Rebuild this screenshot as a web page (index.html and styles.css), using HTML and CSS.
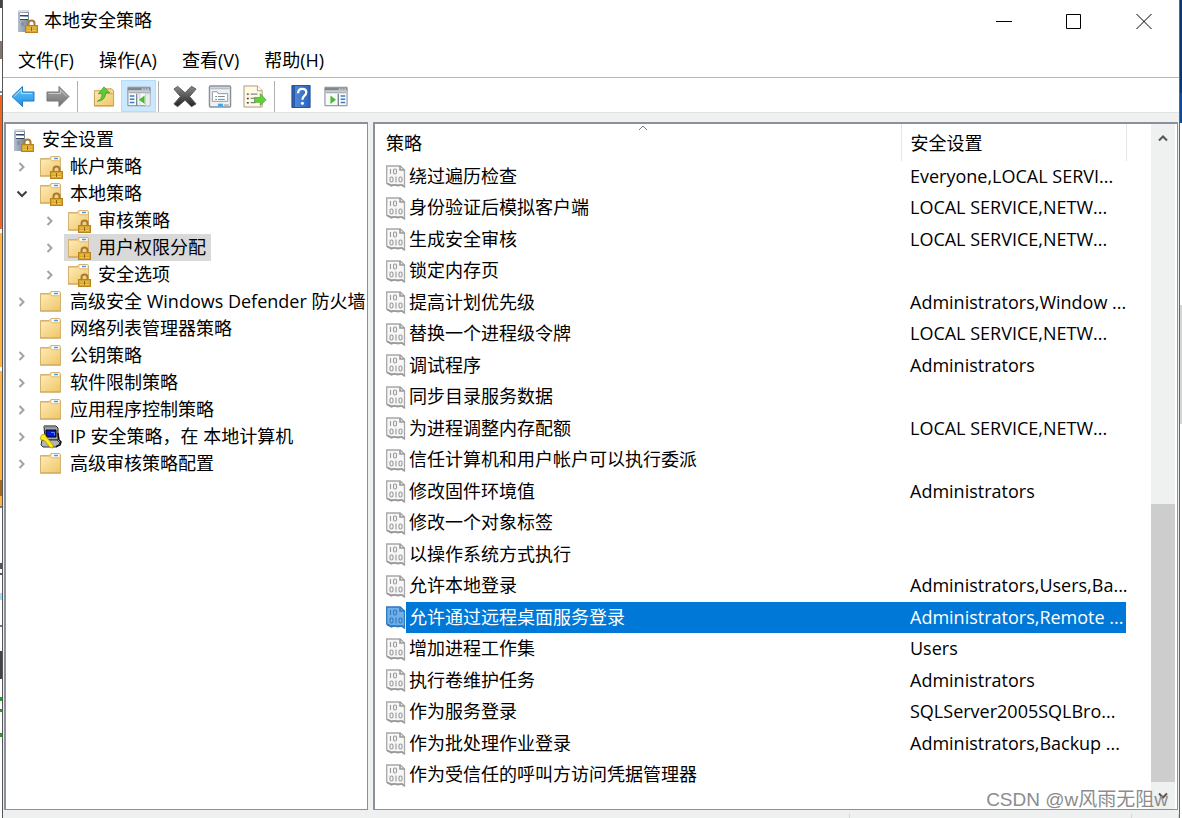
FILE: index.html
```html
<!DOCTYPE html>
<html lang="zh-CN">
<head>
<meta charset="utf-8">
<title>本地安全策略</title>
<link rel="stylesheet" href="styles.css">
</head>
<body>
<svg class="sprite" aria-hidden="true">
  <defs>
    <linearGradient id="gf" x1="0" y1="0" x2="1" y2="1"><stop offset="0" stop-color="#fdeab4"/><stop offset="1" stop-color="#efc667"/></linearGradient>
    <linearGradient id="gs" x1="0" y1="0" x2="1" y2="0"><stop offset="0" stop-color="#b4bfcd"/><stop offset="1" stop-color="#78869a"/></linearGradient>
    <linearGradient id="gb" x1="0" y1="0" x2="0" y2="1"><stop offset="0" stop-color="#6cc9fa"/><stop offset="1" stop-color="#1b8fe6"/></linearGradient>
    <linearGradient id="gg" x1="0" y1="0" x2="0" y2="1"><stop offset="0" stop-color="#a9a9a9"/><stop offset="1" stop-color="#727272"/></linearGradient>
    <linearGradient id="gx" x1="0" y1="0" x2="0" y2="1"><stop offset="0" stop-color="#8a8a8a"/><stop offset="1" stop-color="#222"/></linearGradient>
    <linearGradient id="gh" x1="0" y1="0" x2="1" y2="0"><stop offset="0" stop-color="#27559f"/><stop offset=".2" stop-color="#4d88d8"/><stop offset="1" stop-color="#2b62bd"/></linearGradient>
  </defs>
  <symbol id="lock" viewBox="0 0 13 14"><path d="M3.500 7V4.500a3 3 0 0 1 6 0V7" fill="none" stroke="#a87935" stroke-width="2"/><rect x=".5" y="6.500" width="12" height="7" fill="#d7a52c" stroke="#b8831c"/><path d="M2 9h9M2 11.500h9" stroke="#edc85c"/><path d="M6 8h1v4H6z" fill="#93660e"/></symbol>
  <symbol id="server" viewBox="0 0 22 24"><path d="M1 2l2-1h9v22H1z" fill="url(#gs)"/><path d="M1 2l2-1h9v2H1z" fill="#d7dde5"/><path d="M3 5h8M3 9h8" stroke="#fff" stroke-width="2"/><path d="M3 6.500h8M3 10.500h8" stroke="#34465d"/><path d="M4 14h3M4 16h3" stroke="#6f7e91"/><use href="#lock" x="8" y="10" width="13" height="14"/></symbol>
  <symbol id="folder" viewBox="0 0 24 24"><path d="M1.500 3.500h8.500l2-2h8.500l1 1v18.500h-20z" fill="#e9c983" stroke="#d5b272"/><path d="M12.500 2h8v3h-8z" fill="#fffdf4"/><path d="M15 3.500h4" stroke="#4c9be0" stroke-width="1.500"/><path d="M2 5h9l2 1.500h8v14H2z" fill="url(#gf)"/><path d="M1 21h21" stroke="#c99f54"/></symbol>
  <symbol id="folderlock" viewBox="0 0 24 24"><use href="#folder" width="24" height="24"/><use href="#lock" x="11" y="10" width="13" height="14"/></symbol>
  <symbol id="doc" viewBox="0 0 20 23"><path class="paper" d="M.7 1h13.500l4.300 4v17l-3-2H5.500L.7 18z" stroke-width="1.300"/><path class="fold" d="M14 1v4h4.500M1 18.500l4.500 2.300 2.500-1 4 1 4-1 2.500 2" stroke-width="1.600"/><g class="fold" stroke-width="1.100"><path d="M4.500 4v5M10 11.500v6"/><rect x="7.500" y="4" width="3" height="5" rx="1.400"/><rect x="4" y="12" width="3" height="5" rx="1.400"/><rect x="13" y="12" width="3" height="5" rx="1.400"/></g></symbol>
  <symbol id="chev" viewBox="0 0 10 10"><path d="M2.500 1l4 4-4 4" fill="none" stroke="#a3a3a3" stroke-width="2"/></symbol>
  <symbol id="chevdown" viewBox="0 0 10 10"><path d="M.5 2.500L5 7l4.500-4.500" fill="none" stroke="#404040" stroke-width="2"/></symbol>
  <symbol id="ipsec" viewBox="0 0 24 24"><path d="M5 1h12l2 2v12H6z" fill="#a9a9ad" stroke="#222"/><path d="M5 1.500h12" stroke="#777" stroke-width="2"/><path d="M7 5h10v7H7z" fill="#0519d8" stroke="#000"/><path d="M12 7.500h3.500v3" fill="none" stroke="#5a82ff"/><path d="M3 15h15l3 3-3 4H4l-2-2z" fill="#b4b4b8" stroke="#333"/><path d="M19 8l1 7 2 2-1 3-4 1.500" fill="none" stroke="#111" stroke-width="1.500"/><path d="M2.500 10l3-1 2 3 1.500 2 5 6v3l-3-.5-5-6.500-5-2z" fill="#ffeb13" stroke="#a89100" stroke-width=".7"/></symbol>
  <symbol id="back" viewBox="0 0 24 22"><path d="M1 11L11.500 1v5.500H23v9H11.500V21z" fill="url(#gb)" stroke="#2877b8"/><path d="M3 11l7.500-7v4H21" fill="none" stroke="#a5e1ff"/></symbol>
  <symbol id="fwd" viewBox="0 0 24 22"><path d="M23 11L13 1v5.500H1v9h12V21z" fill="url(#gg)" stroke="#777"/><path d="M2.500 8h12V4.500l6.500 6.500" fill="none" stroke="#c7c7c7"/></symbol>
  <symbol id="up" viewBox="0 0 24 24"><path d="M2 6h9l2-2h7l2 2v16H2z" fill="url(#gf)" stroke="#c59b50"/><path d="M12 9h9M2 21.500h20" stroke="#c9a25b"/><path d="M5 17q5-2 5-8H6l6-7 6 6h-4q-1 9-9 9z" fill="#5bcb37" stroke="#349321" stroke-width=".7"/></symbol>
  <symbol id="tree" viewBox="0 0 26 22"><path d="M1 1h24v20H1z" fill="#f8fafb" stroke="#777e86"/><path d="M1 3h24" stroke="#80878f" stroke-width="3"/><path d="M16 3h2m1 0h2m1 0h2" stroke="#fff"/><path d="M2 6.500h22" stroke="#a9b0b7" stroke-width="2"/><path d="M10.500 8v13" stroke="#7d858e" stroke-width="1.500"/><path d="M3 10.500h5M3 14h5M3 17.500h5" stroke="#397fc6" stroke-width="1.500"/><path d="M11 8h3v13M20 8h5v13h-5z" stroke="#c7cdd2" fill="#e9edf0"/><path d="M19 10v9l-6-4.500z" fill="#4bba2e"/></symbol>
  <symbol id="action" viewBox="0 0 26 22"><path d="M1 1h24v20H1z" fill="#f8fafb" stroke="#777e86"/><path d="M1 3h24" stroke="#80878f" stroke-width="3"/><path d="M16 3h2m1 0h2m1 0h2" stroke="#fff"/><path d="M2 6.500h22" stroke="#a9b0b7" stroke-width="2"/><path d="M15.500 8v13" stroke="#7d858e" stroke-width="1.500"/><path d="M18 10.500h5M18 14h5M18 17.500h5" stroke="#397fc6" stroke-width="1.500"/><path d="M7 10v9l6-4.500z" fill="#4bba2e"/></symbol>
  <symbol id="del" viewBox="0 0 26 24"><path d="M1 4l4-3 8 7 7-7 5 3-7 8 7 8-5 3-7-7-8 7-4-3 7-8z" fill="url(#gx)" stroke="#555"/></symbol>
  <symbol id="props" viewBox="0 0 24 24"><rect x="1" y="1" width="22" height="22" rx="1" fill="#eef1f4" stroke="#8a9097" stroke-width="1.500"/><path d="M2 3.500h20" stroke="#b9bfc6" stroke-width="2"/><path d="M4 7h5l1 2h10v8H4z" fill="#fff" stroke="#8f969d"/><path d="M7 12h2m1 0h7M7 15h2m1 0h7" stroke="#77828d"/><path d="M10 21h5" stroke="#39a5ee" stroke-width="3"/><path d="M16 21h5" stroke="#b5bbc1" stroke-width="2"/></symbol>
  <symbol id="export" viewBox="0 0 25 24"><path d="M1 1h14l5 5v17H1z" fill="#fff8e3" stroke="#a59a83"/><path d="M15 1v5h5" fill="#fff" stroke="#a59a83"/><path d="M4 9.500h2M4 14h2M4 18.500h2" stroke="#444" stroke-width="1.500"/><path d="M8 9.500h7M8 14h5M8 18.500h5" stroke="#8b80a1" stroke-width="1.300"/><path d="M12 13h6V9l6 6.500-6 6V18h-6z" fill="#62cf3d" stroke="#3e9d2b" stroke-width=".7"/></symbol>
  <symbol id="help" viewBox="0 0 20 24"><path d="M.5.500h19v23H.5z" fill="url(#gh)" stroke="#244d91"/><path d="M3 1v22" stroke="#224b93"/><path d="M7 8.500q0-4.500 4.200-4.500T15.500 7.500q0 2-2.300 4-1.700 1.500-1.700 4" fill="none" stroke="#fff" stroke-width="2.400"/><circle cx="11.500" cy="19" r="1.600" fill="#fff"/></symbol>
</svg>
<div class="desktop">
  <div class="behind behind-left"></div>
  <main class="window">
    <header class="titlebar">
      <svg class="app-icon"><use href="#server"/></svg>
      <h1>本地安全策略</h1>
      <div class="controls">
        <button aria-label="最小化"><svg viewBox="0 0 16 16"><path d="M0 8.500h16"/></svg></button>
        <button aria-label="最大化"><svg viewBox="0 0 16 16"><path d="M.5 1.500h14v14h-14z"/></svg></button>
        <button aria-label="关闭"><svg viewBox="0 0 16 16"><path d="M.5 1l15 15M15.500 1L.5 16"/></svg></button>
      </div>
    </header>
    <nav class="menubar">
      <button>文件(F)</button><button>操作(A)</button><button>查看(V)</button><button>帮助(H)</button>
    </nav>
    <div class="toolbar">
      <button aria-label="后退"><svg><use href="#back"/></svg></button>
      <button aria-label="前进"><svg><use href="#fwd"/></svg></button>
      <span class="sep"></span>
      <button aria-label="上一级"><svg><use href="#up"/></svg></button>
      <button class="on" aria-label="显示树"><svg><use href="#tree"/></svg></button>
      <span class="sep"></span>
      <button aria-label="删除"><svg><use href="#del"/></svg></button>
      <button aria-label="属性"><svg><use href="#props"/></svg></button>
      <button aria-label="导出列表"><svg><use href="#export"/></svg></button>
      <span class="sep"></span>
      <button aria-label="帮助"><svg><use href="#help"/></svg></button>
      <button aria-label="显示操作"><svg><use href="#action"/></svg></button>
    </div>
    <div class="panes">
      <section class="pane tree">
        <div class="root"><svg class="ticon"><use href="#server"/></svg>安全设置</div>
        <ul>
          <li><div class="item"><button class="exp" aria-label="展开"><svg><use href="#chev"/></svg></button><span class="node"><svg class="ticon"><use href="#folderlock"/></svg>帐户策略</span></div></li>
          <li><div class="item"><button class="exp" aria-label="折叠"><svg><use href="#chevdown"/></svg></button><span class="node"><svg class="ticon"><use href="#folderlock"/></svg>本地策略</span></div>
            <ul>
              <li><div class="item"><button class="exp" aria-label="展开"><svg><use href="#chev"/></svg></button><span class="node"><svg class="ticon"><use href="#folderlock"/></svg>审核策略</span></div></li>
              <li><div class="item"><button class="exp" aria-label="展开"><svg><use href="#chev"/></svg></button><span class="node current"><svg class="ticon"><use href="#folderlock"/></svg>用户权限分配</span></div></li>
              <li><div class="item"><button class="exp" aria-label="展开"><svg><use href="#chev"/></svg></button><span class="node"><svg class="ticon"><use href="#folderlock"/></svg>安全选项</span></div></li>
            </ul>
          </li>
          <li><div class="item"><button class="exp" aria-label="展开"><svg><use href="#chev"/></svg></button><span class="node"><svg class="ticon"><use href="#folder"/></svg>高级安全 Windows Defender 防火墙</span></div></li>
          <li><div class="item"><span class="exp"></span><span class="node"><svg class="ticon"><use href="#folder"/></svg>网络列表管理器策略</span></div></li>
          <li><div class="item"><button class="exp" aria-label="展开"><svg><use href="#chev"/></svg></button><span class="node"><svg class="ticon"><use href="#folder"/></svg>公钥策略</span></div></li>
          <li><div class="item"><button class="exp" aria-label="展开"><svg><use href="#chev"/></svg></button><span class="node"><svg class="ticon"><use href="#folder"/></svg>软件限制策略</span></div></li>
          <li><div class="item"><button class="exp" aria-label="展开"><svg><use href="#chev"/></svg></button><span class="node"><svg class="ticon"><use href="#folder"/></svg>应用程序控制策略</span></div></li>
          <li><div class="item"><button class="exp" aria-label="展开"><svg><use href="#chev"/></svg></button><span class="node"><svg class="ticon"><use href="#ipsec"/></svg>IP 安全策略，在 本地计算机</span></div></li>
          <li><div class="item"><button class="exp" aria-label="展开"><svg><use href="#chev"/></svg></button><span class="node"><svg class="ticon"><use href="#folder"/></svg>高级审核策略配置</span></div></li>
        </ul>
      </section>
      <section class="pane list">
        <div class="grid">
        <table>
          <colgroup><col><col class="c2"><col class="c3"></colgroup>
          <thead><tr><th>策略<svg class="sort" viewBox="0 0 10 6"><path d="M1 5l4-4 4 4"/></svg></th><th>安全设置</th><th></th></tr></thead>
          <tbody>
            <tr><td><svg class="doc"><use href="#doc"/></svg><span>绕过遍历检查</span></td><td>Everyone,LOCAL SERVI...</td><td></td></tr>
            <tr><td><svg class="doc"><use href="#doc"/></svg><span>身份验证后模拟客户端</span></td><td>LOCAL SERVICE,NETW...</td><td></td></tr>
            <tr><td><svg class="doc"><use href="#doc"/></svg><span>生成安全审核</span></td><td>LOCAL SERVICE,NETW...</td><td></td></tr>
            <tr><td><svg class="doc"><use href="#doc"/></svg><span>锁定内存页</span></td><td></td><td></td></tr>
            <tr><td><svg class="doc"><use href="#doc"/></svg><span>提高计划优先级</span></td><td>Administrators,Window ...</td><td></td></tr>
            <tr><td><svg class="doc"><use href="#doc"/></svg><span>替换一个进程级令牌</span></td><td>LOCAL SERVICE,NETW...</td><td></td></tr>
            <tr><td><svg class="doc"><use href="#doc"/></svg><span>调试程序</span></td><td>Administrators</td><td></td></tr>
            <tr><td><svg class="doc"><use href="#doc"/></svg><span>同步目录服务数据</span></td><td></td><td></td></tr>
            <tr><td><svg class="doc"><use href="#doc"/></svg><span>为进程调整内存配额</span></td><td>LOCAL SERVICE,NETW...</td><td></td></tr>
            <tr><td><svg class="doc"><use href="#doc"/></svg><span>信任计算机和用户帐户可以执行委派</span></td><td></td><td></td></tr>
            <tr><td><svg class="doc"><use href="#doc"/></svg><span>修改固件环境值</span></td><td>Administrators</td><td></td></tr>
            <tr><td><svg class="doc"><use href="#doc"/></svg><span>修改一个对象标签</span></td><td></td><td></td></tr>
            <tr><td><svg class="doc"><use href="#doc"/></svg><span>以操作系统方式执行</span></td><td></td><td></td></tr>
            <tr><td><svg class="doc"><use href="#doc"/></svg><span>允许本地登录</span></td><td>Administrators,Users,Ba...</td><td></td></tr>
            <tr class="selected"><td><svg class="doc"><use href="#doc"/></svg><span>允许通过远程桌面服务登录</span></td><td>Administrators,Remote ...</td><td></td></tr>
            <tr><td><svg class="doc"><use href="#doc"/></svg><span>增加进程工作集</span></td><td>Users</td><td></td></tr>
            <tr><td><svg class="doc"><use href="#doc"/></svg><span>执行卷维护任务</span></td><td>Administrators</td><td></td></tr>
            <tr><td><svg class="doc"><use href="#doc"/></svg><span>作为服务登录</span></td><td>SQLServer2005SQLBro...</td><td></td></tr>
            <tr><td><svg class="doc"><use href="#doc"/></svg><span>作为批处理作业登录</span></td><td>Administrators,Backup ...</td><td></td></tr>
            <tr><td><svg class="doc"><use href="#doc"/></svg><span>作为受信任的呼叫方访问凭据管理器</span></td><td></td><td></td></tr>
          </tbody>
        </table>
        </div>
        <div class="scrollbar">
          <button aria-label="向上滚动"><svg viewBox="0 0 10 8"><path d="M1 6.500l4-4 4 4"/></svg></button>
          <div class="track"><div class="thumb"></div></div>
          <button aria-label="向下滚动"><svg viewBox="0 0 10 8"><path d="M1 1.500l4 4 4-4"/></svg></button>
        </div>
      </section>
    </div>
    <footer class="status"><span></span><span></span><span></span></footer>
  </main>
  <div class="behind behind-right"></div>
  <div class="watermark">CSDN @w风雨无阻w</div>
</div>
</body>
</html>
```
FILE: styles.css
```css
* { box-sizing: border-box; }
body {
  margin: 0;
  background: #fff;
  color: #000;
  font: 18px/27px "Open Sans", "Noto Sans CJK SC", sans-serif;
}
button {
  border: 0;
  padding: 0;
  background: none;
  color: inherit;
  font: inherit;
}
ul { list-style: none; margin: 0; padding: 0; }
.sprite { position: absolute; width: 0; height: 0; }

.desktop { position: relative; display: flex; min-height: 100vh; }
.behind { flex: none; width: 3px; }
.behind-left {
  border-right: 1px solid #555;
  background: linear-gradient(#444 0 8px, #fff 8px 41px, #86736a 41px 59px, #fff 59px 91px, #888 91px 93px, #fff 93px 95px,
    #f26522 95px 229px, #fff 229px 233px, #ffb443 233px 367px, #fff 367px 371px, #ffb443 371px 480px, #a76b1c 480px 496px, #ffb443 496px 506px,
    #777 506px 508px, #fff 508px 563px, #555 563px 569px, #fff 569px 573px, #555 573px 575px, #fff 575px 593px, #9de0ff 593px 600px,
    #fff 600px 625px, #777 625px 627px, #fff 627px 651px, #444 651px 679px, #fff 679px 697px, #1ca81c 697px 701px,
    #fff 701px 709px, #1ca81c 709px 712px, #fff 712px 733px, #1ca81c 733px 737px, #fff 737px);
}
.behind-right {
  border-left: 1px solid #666;
  background: linear-gradient(#083872 0 93px, #0b4c94 93px 123px, #fff 123px 305px, #d5d5d5 305px 424px, #fff 424px);
}
.window { flex: 1; min-width: 0; display: flex; flex-direction: column; background: #eff0f0; }

.titlebar { display: flex; align-items: center; height: 41px; padding-left: 14px; background: #fff; }
.app-icon { width: 22px; height: 24px; margin-right: 5px; }
.titlebar h1 { flex: 1; margin: 0; font-size: 18px; font-weight: 400; }
.controls { display: flex; }
.controls button { display: grid; place-items: center; width: 70px; height: 40px; }
.controls svg { width: 16px; height: 16px; fill: none; stroke: #000; }

.menubar { display: flex; gap: 25px; height: 37px; padding: 6px 15px; background: #fff; border-bottom: 1px solid #b4b9bd; }
.menubar button { line-height: 27px; }

.toolbar { display: flex; align-items: center; height: 35px; padding-left: 2px; padding-top: 2px; background: #fff; border-bottom: 1px solid #e2e3e3; }
.toolbar button { display: grid; place-items: center; width: 35px; height: 32px; }
.toolbar svg { width: 24px; height: 23px; }
.toolbar .on { background: #cce8ff; border: 1px solid #b5dcf8; }
.sep { width: 1px; height: 31px; margin: 0 8px 0 2px; background: #b0b0b0; }

.panes { flex: 1; display: flex; gap: 5px; padding: 9px 1px 1px; }
.pane { background: #fff; border: 2px solid #8b919c; border-right-width: 1px; border-bottom-width: 1px; }
.tree { flex: 0 0 31%; overflow: hidden; white-space: nowrap; padding-top: 2px; }
.root { display: flex; align-items: center; gap: 7px; height: 27px; padding-left: 7px; }
.ticon { flex: none; width: 24px; height: 24px; }
.root .ticon { width: 22px; }
.item { display: flex; align-items: center; height: 27px; padding-left: 7px; }
.exp { display: grid; place-items: center; flex: none; width: 18px; height: 27px; margin-right: 5px; }
.exp svg { width: 10px; height: 10px; }
.node { display: flex; align-items: center; gap: 7px; height: 27px; padding: 0 5px 0 3px; white-space: pre; }
.node.current { background: #d9d9d9; }
.tree ul ul { padding-left: 28px; }

.list { flex: 1; min-width: 0; display: flex; padding-right: 2px; }
.grid { flex: 1; min-width: 0; }
table { width: 100%; table-layout: fixed; border-collapse: collapse; white-space: nowrap; }
.c2 { width: 225px; }
.c3 { width: 25px; }
th { position: relative; height: 37px; padding: 2px 9px 0 11px; font-weight: 400; text-align: left; border-right: 1px solid #e5e5e5; }
th + th { padding-left: 9px; }
th:last-child { border: 0; }
.sort { position: absolute; left: 50%; top: 1px; width: 10px; height: 6px; fill: none; stroke: #777; }
td { height: 32px; padding: 0 0 1px 9px; line-height: 27px; }
tr:nth-child(odd) td { height: 31px; }
td:first-child { display: flex; align-items: center; padding: 0 0 0 11px; }
td span { flex: 1; display: flex; align-items: center; align-self: stretch; padding: 0 0 1px 3px; }
.doc { flex: none; width: 20px; height: 23px; }
.paper { fill: #f7f7f7; stroke: #a8a8a8; }
.fold { fill: none; stroke: #999; }
.selected span, .selected td:nth-child(2) { background: #0078d7; color: #fff; }
.selected .doc { --paper: #6fb0ea; --ink: #2f78bd; }
.paper { fill: var(--paper, #f7f7f7); stroke: var(--ink, #a8a8a8); }
.fold { stroke: var(--ink, #999); }
.scrollbar { flex: none; display: flex; flex-direction: column; width: 24px; background: #eff0f0; }
.scrollbar button { display: grid; place-items: center; height: 27px; }
.scrollbar svg { width: 10px; height: 8px; fill: none; stroke: #555; stroke-width: 2; }
.track { flex: 1; display: flex; flex-direction: column; justify-content: flex-end; }
.thumb { height: 44%; background: #cdcdcd; }

.status { display: grid; grid-template-columns: 72% 24% 1fr; height: 7px; padding-top: 3px; }
.status span { border-right: 1px solid #d5d5d5; }
.watermark {
  position: absolute;
  right: 14px;
  bottom: 5px;
  color: #8c8c8c;
  font: 19px/27px "Liberation Sans", "Noto Sans CJK SC", sans-serif;
}
```
